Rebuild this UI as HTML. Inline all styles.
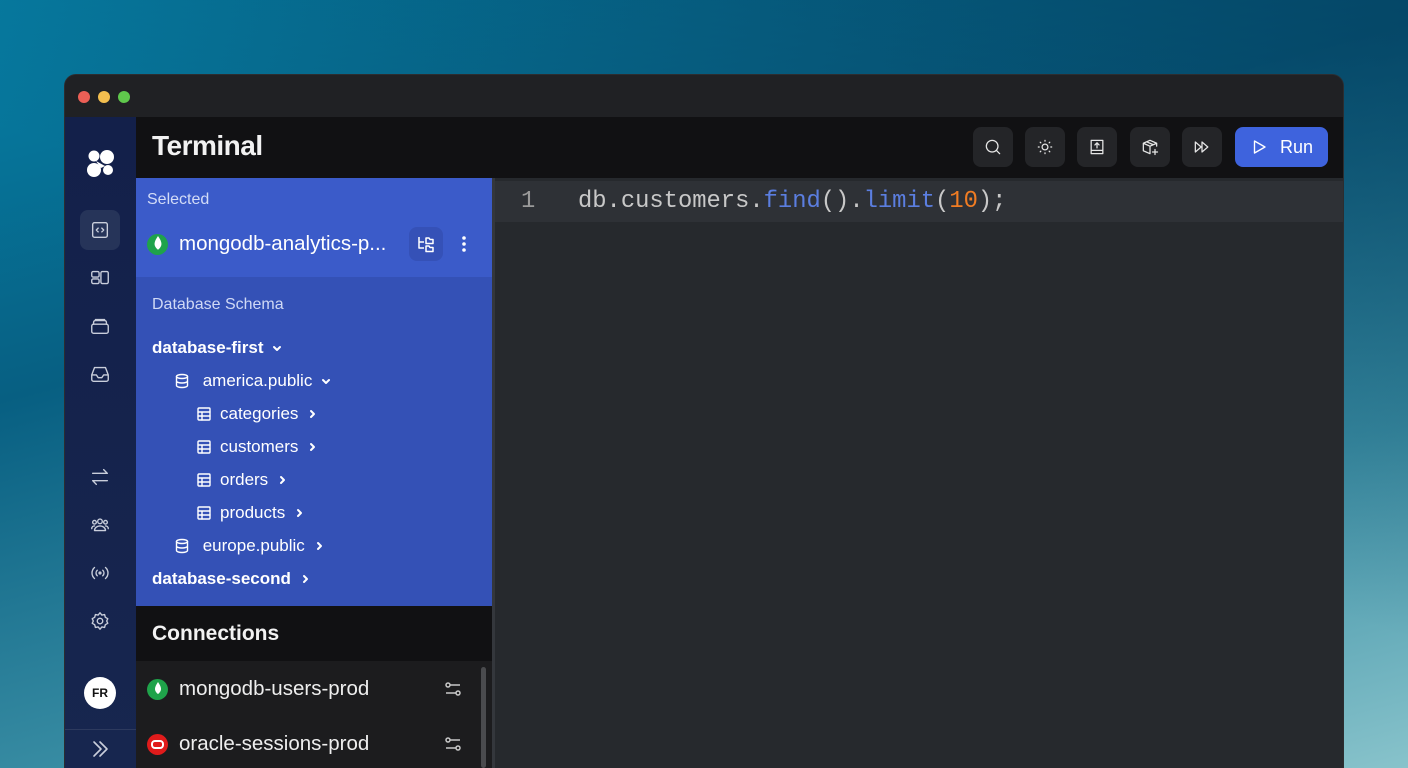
<!DOCTYPE html>
<html><head><meta charset="utf-8"><style>
*{box-sizing:border-box;margin:0;padding:0}
html,body{width:1408px;height:768px;overflow:hidden}
body{font-family:"Liberation Sans",sans-serif;background:linear-gradient(165deg,#0680a6 0%,#075f82 35%,#3a8ea4 70%,#88c3cb 100%);position:relative}
.bgr{position:absolute;inset:0;background:linear-gradient(200deg,rgba(3,50,80,.55) 0%,rgba(3,50,80,0) 50%)}
.win{position:absolute;left:64px;top:74px;width:1280px;height:694px;background:#202124;border-radius:12px 12px 0 0;overflow:hidden;border:1px solid #2c2d30;border-bottom:none}
.tb{height:42px;background:#202124;position:relative}
.dot{position:absolute;top:16px;width:12px;height:12px;border-radius:50%}
.side{position:absolute;left:0;top:42px;width:72px;bottom:0;background:linear-gradient(#13204a,#17264f)}
.ic{position:absolute;left:15px;width:40px;height:40px;display:flex;align-items:center;justify-content:center}
.ic svg{width:22px;height:22px;fill:none;stroke:#c9cedb;stroke-width:1.5;stroke-linecap:round;stroke-linejoin:round}
.hdr{position:absolute;left:71px;top:42px;right:0;height:61px;background:#111113}
.hdr h1{position:absolute;left:16px;top:13px;color:#f2f2f2;font-size:28px;font-weight:700;letter-spacing:-.5px}
.hb{position:absolute;top:10px;width:40px;height:40px;border-radius:8px;background:#242528;display:flex;align-items:center;justify-content:center}
.hb svg{width:20px;height:20px;fill:none;stroke:#e6e6e6;stroke-width:1.5;stroke-linecap:round;stroke-linejoin:round}
.run{position:absolute;left:1099px;top:10px;width:93px;height:40px;border-radius:8px;background:#3e63dd;color:#fff;font-size:18px;display:flex;align-items:center;justify-content:center;gap:12px}
.pan{position:absolute;left:71px;top:103px;width:356px}
.sel{height:99px;background:#3b5bc9;position:relative;color:#fff}
.sch{height:329px;background:#3451b6;position:relative;color:#fff}
.t{position:absolute;white-space:nowrap;font-size:17px;display:flex;align-items:center;gap:8px}
.t svg{width:16px;height:16px;fill:none;stroke:#fff;stroke-width:1.4;stroke-linecap:round;stroke-linejoin:round}
.chev{width:12px!important;height:12px!important;stroke-width:2!important}
.con{position:absolute;left:71px;top:531px;width:356px;height:55px;background:#111113;color:#f2f2f2;font-size:21px;font-weight:700;padding:16px 16px}
.lst{position:absolute;left:71px;top:586px;width:356px;bottom:0;background:#1c1c1e}
.ci{position:absolute;left:11px;display:flex;align-items:center;gap:11px;color:#eee;font-size:20.5px}
.mg{width:21px;height:21px;border-radius:50%;background:#1fa34a;display:flex;align-items:center;justify-content:center}
.ed{position:absolute;left:430px;top:103px;right:0;bottom:0;background:#26292d}
.ln{position:absolute;left:0;top:3px;right:0;height:41px;background:#2e3136;font-family:"Liberation Mono",monospace;font-size:23.8px;color:#c8c8c8;line-height:41px}
</style></head><body><div class="bgr"></div>
<div class="win">
<div class="tb"><div class="dot" style="left:13px;background:#ec5f56"></div><div class="dot" style="left:33px;background:#f4bf4f"></div><div class="dot" style="left:53px;background:#5fc84c"></div></div>
<div class="side">
<svg style="position:absolute;left:20px;top:30px" width="32" height="32" viewBox="0 0 32 32" fill="#fff"><circle cx="9" cy="9" r="5.5"/><circle cx="22" cy="10" r="7"/><circle cx="9" cy="23" r="7"/><circle cx="23" cy="23" r="5"/><path d="M11 14 L20 19 L16 21 L13 17Z"/></svg>
<div class="ic" style="top:93px;background:#263459;border-radius:8px"><svg viewBox="0 0 24 24"><rect x="4" y="4" width="16" height="16" rx="2"/><path d="M10 10l-2 2 2 2M14 10l2 2-2 2"/></svg></div>
<div class="ic" style="top:141px"><svg viewBox="0 0 24 24"><rect x="3" y="5" width="8" height="6" rx="1.5"/><rect x="3" y="13" width="8" height="5" rx="1.5"/><rect x="13" y="5" width="8" height="13" rx="1.5"/></svg></div>
<div class="ic" style="top:189px"><svg viewBox="0 0 24 24"><rect x="3" y="10" width="18" height="10" rx="2"/><path d="M5 10V8a2 2 0 0 1 2-2h10a2 2 0 0 1 2 2v2M7 6V5h10v1"/></svg></div>
<div class="ic" style="top:237px"><svg viewBox="0 0 24 24"><path d="M3 13l3-8h12l3 8v5a2 2 0 0 1-2 2H5a2 2 0 0 1-2-2z M3 13h5l2 3h4l2-3h5"/></svg></div>
<div class="ic" style="top:340px"><svg viewBox="0 0 24 24"><path d="M4 8h16l-4-4M20 16H4l4 4"/></svg></div>
<div class="ic" style="top:388px"><svg viewBox="0 0 24 24"><circle cx="12" cy="8" r="2.5"/><circle cx="6" cy="9" r="2"/><circle cx="18" cy="9" r="2"/><path d="M6 18c0-3 3-5 6-5s6 2 6 5zM3 16c0-2 1.5-3 3-3M21 16c0-2-1.5-3-3-3"/></svg></div>
<div class="ic" style="top:436px"><svg viewBox="0 0 24 24"><circle cx="12" cy="12" r="1"/><path d="M9 9a4 4 0 0 0 0 6M15 9a4 4 0 0 1 0 6M6 6a8 8 0 0 0 0 12M18 6a8 8 0 0 1 0 12"/></svg></div>
<div class="ic" style="top:484px"><svg viewBox="0 0 24 24"><circle cx="12" cy="12" r="3"/><path d="M12 3l2 2.5 3-.5.8 3 2.7 1.5-1.2 2.5 1.2 2.5-2.7 1.5-.8 3-3-.5L12 21l-2-2.5-3 .5-.8-3L3.5 14.5 4.7 12 3.5 9.5 6.2 8 7 5l3 .5z"/></svg></div>
<div style="position:absolute;left:19px;top:560px;width:32px;height:32px;border-radius:50%;background:#fff;color:#111;font-size:12px;font-weight:700;display:flex;align-items:center;justify-content:center">FR</div>
<div style="position:absolute;left:0;right:0;top:612px;border-top:1px solid #2d3a5e"></div>
<svg style="position:absolute;left:25px;top:622px" width="20" height="20" viewBox="0 0 20 20" fill="none" stroke="#c9cedb" stroke-width="1.6" stroke-linecap="round" stroke-linejoin="round"><path d="M4 3l7 7-7 7M10 3l7 7-7 7"/></svg>
</div>
<div class="hdr"><h1>Terminal</h1>
<div class="hb" style="left:837px"><svg viewBox="0 0 24 24"><circle cx="11" cy="11" r="7"/><path d="M16 16l4 4"/></svg></div>
<div class="hb" style="left:889px"><svg viewBox="0 0 24 24"><circle cx="12" cy="12" r="3.5"/><path d="M12 4v1M12 19v1M4 12h1M19 12h1M6.3 6.3l.7.7M17 17l.7.7M6.3 17.7l.7-.7M17 7l.7-.7"/></svg></div>
<div class="hb" style="left:941px"><svg viewBox="0 0 24 24"><path d="M5 4h14v16H5zM5 16h14M12 13V7M9.5 9.5L12 7l2.5 2.5"/></svg></div>
<div class="hb" style="left:994px"><svg viewBox="0 0 24 24"><path d="M20 11V7.5L12 4 4 7.5v9L12 20M4 7.5l8 3.5 8-3.5M12 11v9M8 5.8l8 3.5M18 15v6M15 18h6"/></svg></div>
<div class="hb" style="left:1046px"><svg viewBox="0 0 24 24"><path d="M4 6l7 6-7 6zM12 6l7 6-7 6z"/></svg></div>
<div class="run"><svg width="18" height="18" viewBox="0 0 24 24" fill="none" stroke="#fff" stroke-width="1.8" stroke-linejoin="round"><path d="M6 4l14 8-14 8z"/></svg>Run</div>
</div>
<div class="pan">
<div class="sel">
<div class="t" style="left:11px;top:13px;font-size:16px;color:#d3dcf7">Selected</div>
<div class="t" style="left:11px;top:54px;font-size:20.5px;gap:11px"><div class="mg"><svg width="8" height="14" viewBox="0 0 8 14"><path d="M4 0C6 3 7 5 7 7s-1.5 4-3 5C2.5 11 1 9 1 7s1-4 3-7z" fill="#fff" stroke="none"/></svg></div>mongodb-analytics-p...</div>
<div style="position:absolute;left:273px;top:49px;width:34px;height:34px;border-radius:8px;background:#3551b7"><svg style="position:absolute;left:7px;top:7px" width="20" height="20" viewBox="0 0 20 20" fill="none" stroke="#fff" stroke-width="1.5" stroke-linejoin="round"><path d="M3 3v11h5M3 8h5M10 4h3l1 1.5h3v4h-7zM10 12h3l1 1.5h3v4h-7z"/></svg></div>
<svg style="position:absolute;left:318px;top:56px" width="20" height="20" viewBox="0 0 20 20" fill="#fff"><circle cx="10" cy="4" r="1.8"/><circle cx="10" cy="10" r="1.8"/><circle cx="10" cy="16" r="1.8"/></svg>
</div>
<div class="sch">
<div class="t" style="left:16px;top:19px;font-size:16px;color:#d0d9f5">Database Schema</div>
<div class="t" style="left:16px;top:61px;font-weight:700">database-first <svg class="chev" viewBox="0 0 12 12"><path d="M3 5l3 3 3-3"/></svg></div>
<div class="t" style="left:38px;top:94px"><svg viewBox="0 0 16 16"><ellipse cx="8" cy="3.5" rx="5.5" ry="2"/><path d="M2.5 3.5v9c0 1.1 2.5 2 5.5 2s5.5-.9 5.5-2v-9M2.5 8c0 1.1 2.5 2 5.5 2s5.5-.9 5.5-2"/></svg>&nbsp;america.public <svg class="chev" viewBox="0 0 12 12"><path d="M3 5l3 3 3-3"/></svg></div>
<div class="t" style="left:60px;top:127px"><svg viewBox="0 0 16 16"><rect x="2" y="2" width="12" height="12" rx="1"/><path d="M2 6h12M2 10h12M6 6v8"/></svg>categories <svg class="chev" viewBox="0 0 12 12"><path d="M5 3l3 3-3 3"/></svg></div>
<div class="t" style="left:60px;top:160px"><svg viewBox="0 0 16 16"><rect x="2" y="2" width="12" height="12" rx="1"/><path d="M2 6h12M2 10h12M6 6v8"/></svg>customers <svg class="chev" viewBox="0 0 12 12"><path d="M5 3l3 3-3 3"/></svg></div>
<div class="t" style="left:60px;top:193px"><svg viewBox="0 0 16 16"><rect x="2" y="2" width="12" height="12" rx="1"/><path d="M2 6h12M2 10h12M6 6v8"/></svg>orders <svg class="chev" viewBox="0 0 12 12"><path d="M5 3l3 3-3 3"/></svg></div>
<div class="t" style="left:60px;top:226px"><svg viewBox="0 0 16 16"><rect x="2" y="2" width="12" height="12" rx="1"/><path d="M2 6h12M2 10h12M6 6v8"/></svg>products <svg class="chev" viewBox="0 0 12 12"><path d="M5 3l3 3-3 3"/></svg></div>
<div class="t" style="left:38px;top:259px"><svg viewBox="0 0 16 16"><ellipse cx="8" cy="3.5" rx="5.5" ry="2"/><path d="M2.5 3.5v9c0 1.1 2.5 2 5.5 2s5.5-.9 5.5-2v-9M2.5 8c0 1.1 2.5 2 5.5 2s5.5-.9 5.5-2"/></svg>&nbsp;europe.public <svg class="chev" viewBox="0 0 12 12"><path d="M5 3l3 3-3 3"/></svg></div>
<div class="t" style="left:16px;top:292px;font-weight:700">database-second <svg class="chev" viewBox="0 0 12 12"><path d="M5 3l3 3-3 3"/></svg></div>
</div>
</div>
<div class="con">Connections</div>
<div class="lst">
<div class="ci" style="top:16px"><div class="mg"><svg width="8" height="14" viewBox="0 0 8 14"><path d="M4 0C6 3 7 5 7 7s-1.5 4-3 5C2.5 11 1 9 1 7s1-4 3-7z" fill="#fff"/></svg></div>mongodb-users-prod</div>
<div class="ci" style="top:71px"><div class="mg" style="background:#e01b1b"><div style="width:13px;height:9px;border:2px solid #fff;border-radius:4px"></div></div>oracle-sessions-prod</div>
<svg style="position:absolute;left:307px;top:18px" width="20" height="20" viewBox="0 0 20 20" fill="none" stroke="#c8c8c8" stroke-width="1.5"><circle cx="5" cy="6" r="2"/><circle cx="15" cy="14" r="2"/><path d="M7 6h10M3 14h10"/></svg>
<svg style="position:absolute;left:307px;top:73px" width="20" height="20" viewBox="0 0 20 20" fill="none" stroke="#c8c8c8" stroke-width="1.5"><circle cx="5" cy="6" r="2"/><circle cx="15" cy="14" r="2"/><path d="M7 6h10M3 14h10"/></svg>
<div style="position:absolute;left:345px;top:6px;width:5px;bottom:0;border-radius:3px;background:#4a4b4e"></div>
</div>
<div style="position:absolute;left:427px;top:103px;width:3px;bottom:0;background:#34373c"></div>
<div class="ed"><div class="ln"><span style="position:absolute;left:26px;color:#9a9a9a">1</span><span style="position:absolute;left:83px">db.customers.<span style="color:#5b7ee0">find</span>().<span style="color:#5b7ee0">limit</span>(<span style="color:#f07c23">10</span>);</span></div></div>
</div>
</body></html>
